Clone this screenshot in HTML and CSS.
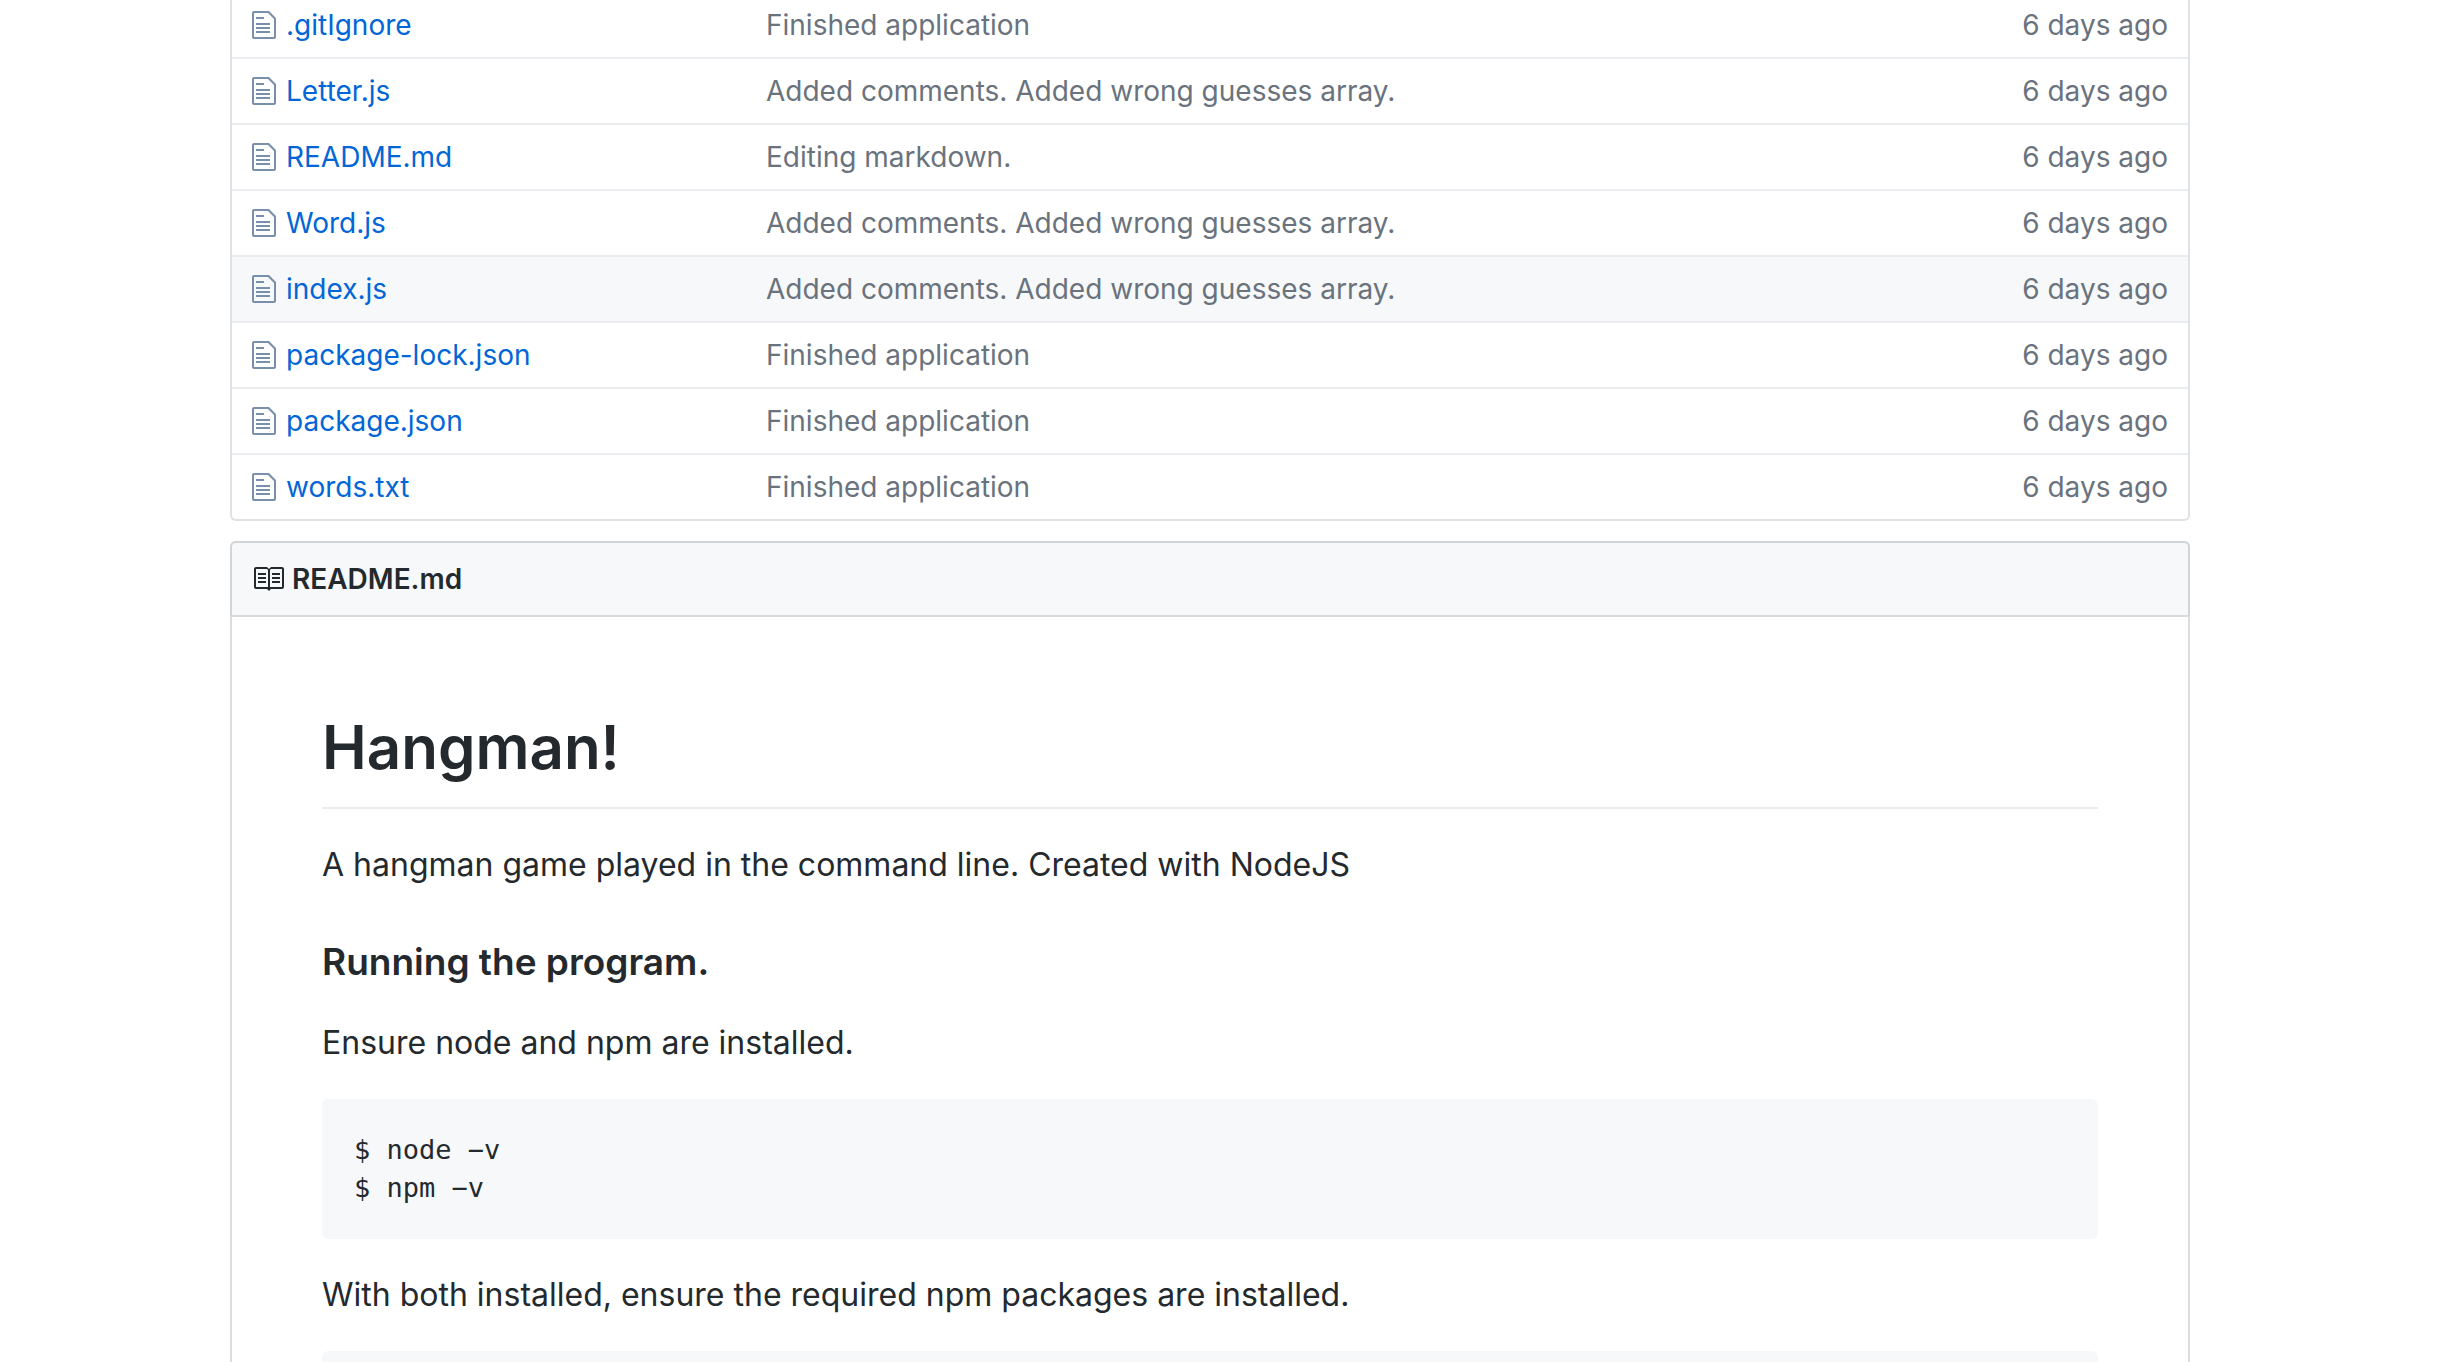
FILE: index.html
```html
<!DOCTYPE html>
<html lang="en">
<head>
<meta charset="utf-8">
<meta name="viewport" content="width=device-width, initial-scale=1">
<title>Hangman</title>
<link rel="stylesheet" href="styles.css">
</head>
<body>
<svg class="sprite" aria-hidden="true">
  <symbol id="file" viewBox="0 0 12 16"><path d="M6 5H2V4h4v1zM2 8h7V7H2v1zm0 2h7V9H2v1zm0 2h7v-1H2v1zm10-7.5V14c0 .55-.45 1-1 1H1c-.55 0-1-.45-1-1V2c0-.55.45-1 1-1h7.5L12 4.5zM11 5L8 2H1v12h10V5z"/></symbol>
  <symbol id="book" viewBox="0 0 16 16"><path d="M3 5h4v1H3V5zm0 3h4V7H3v1zm0 2h4V9H3v1zm11-5h-4v1h4V5zm0 2h-4v1h4V7zm0 2h-4v1h4V9zm2-6v9c0 .55-.45 1-1 1H9.5l-1 1-1-1H2c-.55 0-1-.45-1-1V3c0-.55.45-1 1-1h5.5l1 1 1-1H15c.55 0 1 .45 1 1zm-8 .5L7.5 3H2v9h6V3.5zm7-.5H9.5l-.5.5V12h6V3z"/></symbol>
</svg>
<main class="container">
  <div class="file-wrap">
    <table class="files" aria-label="Files">
      <tbody>
        <tr><td class="name"><div class="entry"><svg class="icon-file"><use href="#file"/></svg><a href="#">.gitIgnore</a></div></td><td class="message">Finished application</td><td class="age">6 days ago</td></tr>
        <tr><td class="name"><div class="entry"><svg class="icon-file"><use href="#file"/></svg><a href="#">Letter.js</a></div></td><td class="message">Added comments. Added wrong guesses array.</td><td class="age">6 days ago</td></tr>
        <tr><td class="name"><div class="entry"><svg class="icon-file"><use href="#file"/></svg><a href="#">README.md</a></div></td><td class="message">Editing markdown.</td><td class="age">6 days ago</td></tr>
        <tr><td class="name"><div class="entry"><svg class="icon-file"><use href="#file"/></svg><a href="#">Word.js</a></div></td><td class="message">Added comments. Added wrong guesses array.</td><td class="age">6 days ago</td></tr>
        <tr class="active"><td class="name"><div class="entry"><svg class="icon-file"><use href="#file"/></svg><a href="#">index.js</a></div></td><td class="message">Added comments. Added wrong guesses array.</td><td class="age">6 days ago</td></tr>
        <tr><td class="name"><div class="entry"><svg class="icon-file"><use href="#file"/></svg><a href="#">package-lock.json</a></div></td><td class="message">Finished application</td><td class="age">6 days ago</td></tr>
        <tr><td class="name"><div class="entry"><svg class="icon-file"><use href="#file"/></svg><a href="#">package.json</a></div></td><td class="message">Finished application</td><td class="age">6 days ago</td></tr>
        <tr><td class="name"><div class="entry"><svg class="icon-file"><use href="#file"/></svg><a href="#">words.txt</a></div></td><td class="message">Finished application</td><td class="age">6 days ago</td></tr>
      </tbody>
    </table>
  </div>
  <section class="readme">
    <h3 class="readme-title"><svg class="icon-book"><use href="#book"/></svg>README.md</h3>
    <article class="markdown">
      <h1>Hangman!</h1>
      <p>A hangman game played in the command line. Created with NodeJS</p>
      <h3>Running the program.</h3>
      <p>Ensure node and npm are installed.</p>
      <pre><code>$ node −v
$ npm −v</code></pre>
      <p>With both installed, ensure the required npm packages are installed.</p>
      <pre></pre>
    </article>
  </section>
</main>
</body>
</html>
```

FILE: styles.css
```css
* {
  box-sizing: border-box;
}

body {
  margin: 0;
  padding-right: 28px;
  height: 100vh;
  overflow: hidden;
  background: #fff;
  color: #24292e;
  font-family: Inter, "Liberation Sans", sans-serif;
  font-size: 28px;
}

a {
  color: #0366d6;
  text-decoration: none;
}

svg {
  fill: currentColor;
  flex: none;
}

.sprite {
  display: none;
}

.container {
  max-width: 1960px;
  margin: 0 auto;
}

/* File list */
.file-wrap {
  border: 2px solid #dfe2e5;
  border-top: 0;
  border-radius: 0 0 6px 6px;
  margin-bottom: 20px;
}

.files {
  width: 100%;
  border-collapse: separate;
  border-spacing: 0;
  line-height: 40px;
}

.files td {
  padding: 12px 0;
  border-top: 2px solid #eaecef;
  color: #6a737d;
}

.files tr:first-child td {
  border-top: 0;
  padding-top: 5px;
}

.files .active td {
  background: #f6f8fa;
}

.files .name {
  width: 534px;
  padding-left: 20px;
}

.files .age {
  padding-right: 20px;
  text-align: right;
  white-space: nowrap;
}

.entry {
  display: flex;
  align-items: center;
  gap: 10px;
}

.icon-file {
  width: 24px;
  height: 32px;
  color: #7890ab;
}

/* Readme */
.readme {
  border: 2px solid #ddd;
  border-radius: 6px;
}

.readme-title {
  display: flex;
  align-items: center;
  gap: 8px;
  margin: -2px -2px 0;
  padding: 16px 20px;
  border: 2px solid #d1d5da;
  border-bottom-color: #d8dbde;
  border-radius: 6px 6px 0 0;
  background: #f6f8fa;
  font-size: 28px;
  line-height: 40px;
  font-weight: 600;
}

.icon-book {
  width: 32px;
  height: 32px;
}

.markdown {
  padding: 90px;
  font-size: 32px;
  line-height: 48px;
}

.markdown h1 {
  margin: 0 0 32px;
  padding-bottom: 20px;
  border-bottom: 2px solid #eaecef;
  font-size: 60px;
  line-height: 80px;
  font-weight: 600;
}

.markdown h3 {
  margin: 48px 0 32px;
  font-size: 37px;
  line-height: 50px;
  font-weight: 600;
}

.markdown p {
  margin: 0 0 32px;
}

.markdown pre {
  margin: 0 0 32px;
  padding: 32px;
  border-radius: 6px;
  background: #f6f8fa;
  font-family: "DejaVu Sans Mono", monospace;
  font-size: 27px;
  line-height: 38px;
}

.markdown code {
  font: inherit;
}
```
